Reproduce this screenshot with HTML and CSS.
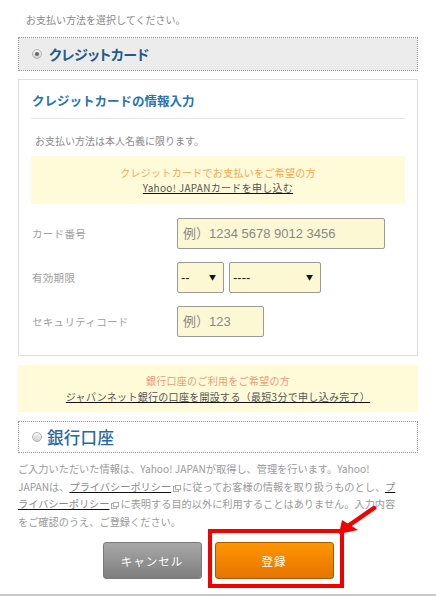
FILE: index.html
```html
<!DOCTYPE html>
<html lang="ja">
<head>
    <meta charset="UTF-8">
    <meta name="viewport" content="width=device-width, initial-scale=1.0">
    <title>お支払い方法の選択</title>
    <link rel="stylesheet" href="styles.css">
</head>
<body>
<div class="page">
    <p class="lead">お支払い方法を選択してください。</p>

    <div class="method method-active">
        <span class="radio radio-on"></span>
        <span class="method-name">クレジットカード</span>
    </div>

    <div class="card">
        <h2 class="card-title">クレジットカードの情報入力</h2>
        <p class="note">お支払い方法は本人名義に限ります。</p>
        <div class="promo">
            <p class="promo-lead">クレジットカードでお支払いをご希望の方</p>
            <p><a class="promo-link" href="#">Yahoo! JAPANカードを申し込む</a></p>
        </div>

        <div class="form">
            <div class="row">
                <label class="row-label">カード番号</label>
                <input class="field field-card" type="text" placeholder="例）1234 5678 9012 3456">
            </div>
            <div class="row">
                <label class="row-label">有効期限</label>
                <div class="selects">
                    <span class="select select-month"><select><option>--</option></select></span>
                    <span class="select select-year"><select><option>----</option></select></span>
                </div>
            </div>
            <div class="row">
                <label class="row-label">セキュリティコード</label>
                <input class="field field-cvc" type="text" placeholder="例）123">
            </div>
        </div>
    </div>

    <div class="promo promo-bank">
        <p class="promo-lead">銀行口座のご利用をご希望の方</p>
        <p><a class="promo-link" href="#">ジャパンネット銀行の口座を開設する（最短3分で申し込み完了）</a></p>
    </div>

    <div class="method method-bank">
        <span class="radio"></span>
        <span class="method-name method-name-off">銀行口座</span>
    </div>

    <p class="terms">
        ご入力いただいた情報は、Yahoo! JAPANが取得し、管理を行います。Yahoo!<br>
        JAPANは、<a href="#">プライバシーポリシー</a><svg class="ext" width="8" height="7" viewBox="0 0 8 7"><rect x="0.5" y="1.5" width="5" height="5" fill="#fff" stroke="#aaa"/><rect x="2.5" y="0.5" width="5" height="4" fill="#fff" stroke="#aaa"/></svg>に従ってお客様の情報を取り扱うものとし、<a href="#">プ<br>
        ライバシーポリシー</a><svg class="ext" width="8" height="7" viewBox="0 0 8 7"><rect x="0.5" y="1.5" width="5" height="5" fill="#fff" stroke="#aaa"/><rect x="2.5" y="0.5" width="5" height="4" fill="#fff" stroke="#aaa"/></svg>に表明する目的以外に利用することはありません。入力内容<br>
        をご確認のうえ、ご登録ください。
    </p>

    <div class="actions">
        <button class="btn btn-cancel" type="button">キャンセル</button>
        <div class="submit-wrap">
            <button class="btn btn-submit" type="submit">登録</button>
            <!-- annotation overlay -->
            <span class="mark-box"></span>
            <svg class="mark-arrow" width="50" height="40" viewBox="0 0 50 40">
                <line x1="17" y1="25" x2="43" y2="7" stroke="#f20000" stroke-width="4.5" stroke-linecap="round"/>
                <polygon points="8,33 11,19 27,29" fill="#f20000"/>
            </svg>
        </div>
    </div>
</div>
<div class="footer-bar"></div>
</body>
</html>
```

FILE: styles.css
```css
body {
    margin: 0;
    background-color: #fff;
    font-family: "Noto Sans CJK JP", sans-serif;
    color: #999;
}
.page {
    padding: 13px 18px 0;
}
p {
    margin: 0;
}
a {
    color: #444;
    text-decoration: underline;
    text-decoration-color: #111;
}

.lead {
    font-size: 10px;
    line-height: 14px;
    padding-left: 8px;
    color: #8a8a8a;
    margin-bottom: 10px;
}

.method {
    box-sizing: border-box;
    display: flex;
    align-items: center;
    height: 34px;
    border: 1px dotted #999;
    padding-left: 13px;
}
.method-active {
    background-color: #ececec;
}
.method-bank {
    height: 32px;
    margin-top: 9px;
}
.radio {
    width: 8px;
    height: 8px;
    border-radius: 50%;
    border: 1px solid #b5b5b5;
    background: linear-gradient(#f4f4f4, #d0d0d0);
    margin-right: 7px;
    position: relative;
}
.radio-on::after {
    content: "";
    position: absolute;
    left: 2px;
    top: 2px;
    width: 4px;
    height: 4px;
    border-radius: 50%;
    background-color: #666;
}
.method-bank .radio {
    margin-right: 5px;
}
.method-name {
    font-size: 14px;
    font-weight: bold;
    color: #1f5b8c;
    letter-spacing: -0.2px;
    font-feature-settings: "palt";
    line-height: 20px;
}
.method-name-off {
    font-size: 16.5px;
    font-weight: 500;
    color: #2a6aa0;
    letter-spacing: 0.3px;
    font-feature-settings: normal;
}

.card {
    margin-top: 8px;
    border: 1px solid #dedede;
    padding: 0 12px 18px;
}
.card-title {
    margin: 0;
    padding: 11px 0 7px 1px;
    font-size: 12.5px;
    line-height: 20px;
    color: #2a73ad;
    border-bottom: 1px solid #e6e6e6;
}
.note {
    margin-top: 15px;
    padding-left: 4px;
    font-size: 10px;
    line-height: 14px;
    color: #8a8a8a;
}

.promo {
    box-sizing: border-box;
    height: 48px;
    margin-top: 8px;
    background-color: #fffbd9;
    padding-top: 9px;
    text-align: center;
    font-size: 10px;
    line-height: 15px;
    letter-spacing: 0.3px;
}
.promo-lead {
    color: #f0a852;
}
.promo-link {
    color: #555;
}
.promo-bank {
    height: 47px;
    margin-top: 9px;
    padding-top: 8px;
    line-height: 16px;
}
.promo-bank .promo-lead {
    color: #ec9a78;
}

.form {
    margin-top: 14px;
    display: flex;
    flex-direction: column;
    gap: 13px;
}
.row {
    display: grid;
    grid-template-columns: 146px auto;
    align-items: center;
}
.row-label {
    font-size: 10.5px;
    color: #a0a0a0;
    padding-left: 1px;
    letter-spacing: 0.3px;
}
.field {
    box-sizing: border-box;
    height: 31px;
    border: 1px solid #9a9a9a;
    border-radius: 2px;
    background-color: #fdf8d4;
    padding: 0 5px;
    font-family: "Liberation Sans", "Noto Sans CJK JP", sans-serif;
    font-size: 13px;
}
.field::placeholder {
    color: #888;
}
.field-card {
    width: 208px;
}
.field-cvc {
    width: 87px;
}

.selects {
    display: flex;
    gap: 5px;
}
.select {
    position: relative;
    display: block;
}
.select select {
    appearance: none;
    -webkit-appearance: none;
    box-sizing: border-box;
    height: 31px;
    border: 1px solid #9a9a9a;
    border-radius: 2px;
    background-color: #fdf8d4;
    padding: 0 3px;
    font-family: "Liberation Sans", sans-serif;
    font-size: 13px;
    color: #222;
}
.select::after {
    content: "\25BC";
    position: absolute;
    right: 8px;
    top: 10px;
    font-size: 7px;
    color: #111;
    pointer-events: none;
}
.select-month select {
    width: 47px;
}
.select-year select {
    width: 92px;
}

.terms {
    margin-top: 7px;
    font-size: 10.2px;
    line-height: 17.5px;
    color: #9a9a9a;
    white-space: nowrap;
}
.terms a {
    color: #8a8a8a;
}
.ext {
    margin: 0 1px 0 2px;
    vertical-align: -1px;
}

.actions {
    margin-top: 12px;
    display: flex;
    justify-content: center;
    gap: 13px;
}
.btn {
    box-sizing: border-box;
    height: 37px;
    border-radius: 3px;
    color: #fff;
    font-family: "Noto Sans CJK JP", sans-serif;
    font-size: 11.5px;
    letter-spacing: 1px;
    cursor: pointer;
}
.btn-cancel {
    width: 99px;
    border: 1px solid #7a7a7a;
    background: linear-gradient(#a8a8a8, #7e7e7e);
}
.submit-wrap {
    position: relative;
}
.btn-submit {
    width: 119px;
    border: 1px solid #a85a00;
    background: linear-gradient(#ff9500, #e67400);
}
.mark-box {
    position: absolute;
    left: -7px;
    top: -13px;
    width: 128px;
    height: 51px;
    border: 4px solid #f20000;
    pointer-events: none;
}
.mark-arrow {
    position: absolute;
    left: 116px;
    top: -41px;
    pointer-events: none;
}

.footer-bar {
    margin-top: 15px;
    height: 4px;
    background-color: #c9c9c9;
}
```
